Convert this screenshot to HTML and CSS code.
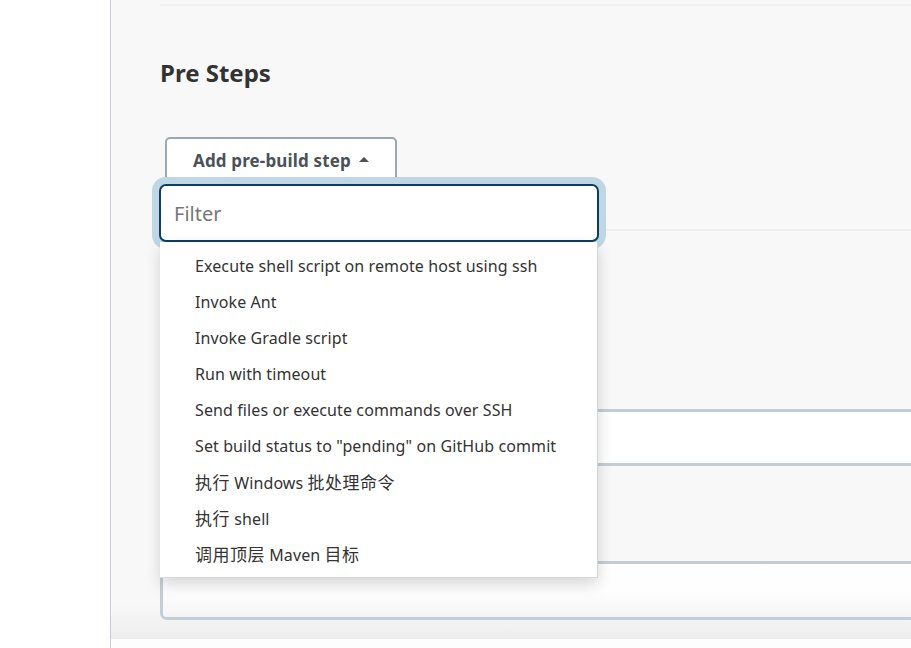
FILE: index.html
```html
<!DOCTYPE html>
<html lang="zh">
<head>
<meta charset="utf-8">
<title>Pre Steps</title>
<link rel="stylesheet" href="styles.css">
</head>
<body>
<div class="page">
  <aside class="sidebar"></aside>
  <div class="content">
    <main class="main">
      <div class="topline"></div>
      <h2 class="section-title">Pre Steps</h2>
      <button class="add-btn" type="button">Add pre-build step <span class="caret"></span></button>
      <div class="section-sep"></div>
      <div class="steps-box">
        <div class="row row-white"></div>
        <div class="row row-grey"></div>
        <div class="row row-fade"></div>
      </div>

      <div class="dropdown">
        <input class="filter" type="text" placeholder="Filter">
        <ul class="menu">
          <li>Execute shell script on remote host using ssh</li>
          <li>Invoke Ant</li>
          <li>Invoke Gradle script</li>
          <li>Run with timeout</li>
          <li>Send files or execute commands over SSH</li>
          <li>Set build status to "pending" on GitHub commit</li>
          <li><span class="cjk">执行</span> Windows <span class="cjk">批处理命令</span></li>
          <li><span class="cjk">执行</span> shell</li>
          <li><span class="cjk">调用顶层</span> Maven <span class="cjk">目标</span></li>
        </ul>
      </div>
    </main>
    <div class="footer-strip"></div>
  </div>
</div>
</body>
</html>
```
FILE: styles.css
```css
* { box-sizing: border-box; }
html, body { margin: 0; padding: 0; }
body {
  font-family: "Noto Sans", "Noto Sans CJK SC", sans-serif;
  color: #333;
  background: #fff;
  width: 911px;
  height: 648px;
  overflow: hidden;
}
.page { display: flex; height: 648px; }
.sidebar {
  width: 111px;
  flex: none;
  background: #fff;
  border-right: 1px solid #c7d0d8;
}
.content { flex: 1; display: flex; flex-direction: column; min-width: 0; }
.main {
  position: relative;
  height: 639px;
  overflow: hidden;
  padding-left: 49px;
  background: linear-gradient(to bottom, #f8f8f8 0, #f8f8f8 605px, #ededed 639px);
}
.footer-strip { flex: 1; background: #fdfdfd; }
.topline {
  margin-top: 4px;
  height: 2px;
  background: #efefef;
}
.section-title {
  margin: 49px 0 0 0;
  font-size: 24px;
  line-height: 36px;
  font-weight: 700;
  color: #333;
  letter-spacing: 0;
}
.add-btn {
  display: flex;
  align-items: center;
  gap: 8px;
  margin: 46px 0 0 5px;
  height: 47px;
  width: 232px;
  padding: 0 0 0 26px;
  border: 2px solid #9ba8b2;
  border-radius: 5px;
  background: #fff;
  font-family: "Noto Sans", sans-serif;
  font-size: 17px;
  font-weight: 700;
  color: #4b515a;
  letter-spacing: 0.15px;
}
.caret {
  width: 0; height: 0;
  border-left: 5px solid transparent;
  border-right: 5px solid transparent;
  border-bottom: 5px solid #4b515a;
  margin-top: -2px;
}
.section-sep {
  margin-top: 45px;
  height: 2px;
  background: #eeeeee;
}
.steps-box {
  margin-top: 178px;
  width: 900px;
  border: 3px solid #c5cdd4;
  border-right: none;
  border-radius: 7px 0 0 7px;
  overflow: hidden;
}
.row-white { background: #fff; border-bottom: 3px solid #c5cdd4; height: 54px; }
.row-grey { background: #f8f8f8; border-bottom: 3px solid #c5cdd4; height: 98px; }
.row-fade { height: 53px; background: linear-gradient(to bottom, #fff 0, #fdfdfd 30px, #f4f4f4 53px); }

.dropdown {
  position: absolute;
  left: 48px;
  top: 184px;
  width: 440px;
  z-index: 2;
}
.filter {
  display: block;
  width: 440px;
  height: 58px;
  padding: 0 13px;
  border: 2px solid #0d3e5f;
  border-radius: 7px;
  box-shadow: 0 0 0 7px #bfd7e4;
  font-family: "Noto Sans", sans-serif;
  font-size: 20px;
  color: #333;
  outline: none;
  background: #fff;
}
.filter::placeholder { color: #777; }
.menu {
  list-style: none;
  margin: 0 0 0 1px;
  padding: 6px 0 5px;
  width: 438px;
  background: #fff;
  border-right: 1px solid #cfd4d8;
  border-bottom: 1px solid #d6d9dc;
  box-shadow: 0 6px 14px rgba(0,0,0,0.16);
  position: relative;
}
.menu li {
  height: 36px;
  line-height: 36px;
  padding-left: 35px;
  font-size: 16px;
  color: #333;
  letter-spacing: 0.1px;
  white-space: nowrap;
}
.menu .cjk {
  font-family: "Noto Sans CJK SC", sans-serif;
  font-size: 17px;
  letter-spacing: 0.5px;
}
```
